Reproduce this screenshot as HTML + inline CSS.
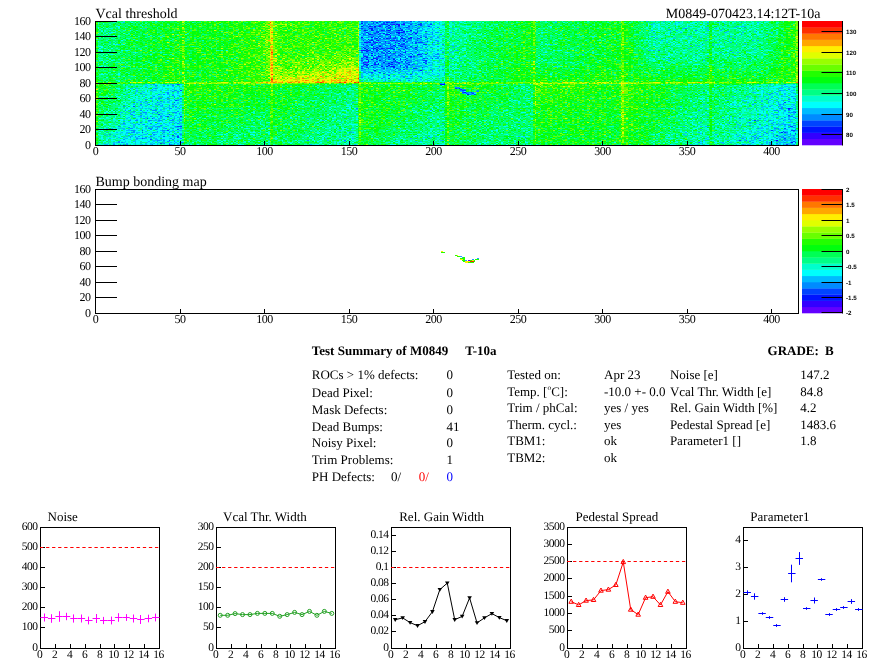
<!DOCTYPE html>
<html><head><meta charset="utf-8"><title>Test Summary of M0849</title>
<style>html,body{margin:0;padding:0;background:#fff;}body{width:896px;height:672px;overflow:hidden}</style>
</head><body>
<svg width="896" height="672" viewBox="0 0 896 672" style="display:block;text-rendering:geometricPrecision;will-change:transform">
<rect width="896" height="672" fill="#fff"/>
<rect x="95.5" y="21.5" width="703.0" height="124.0" fill="none" stroke="#000" stroke-width="1"/>
<defs><linearGradient id="g1" gradientUnits="userSpaceOnUse" x1="96.0" y1="21.0" x2="183.8" y2="52.0"><stop offset="0" stop-color="#6b0088" stop-opacity="1"/><stop offset="0.4" stop-color="#790088" stop-opacity="1"/><stop offset="1" stop-color="#8a0088" stop-opacity="1"/></linearGradient><linearGradient id="g2" gradientUnits="userSpaceOnUse" x1="183.8" y1="21.0" x2="271.5" y2="39.6"><stop offset="0" stop-color="#820088" stop-opacity="1"/><stop offset="0.6" stop-color="#8b0088" stop-opacity="1"/><stop offset="1" stop-color="#960088" stop-opacity="1"/></linearGradient><linearGradient id="g3" gradientUnits="userSpaceOnUse" x1="271.5" y1="21.0" x2="280.3" y2="83.0"><stop offset="0" stop-color="#8f0088" stop-opacity="1"/><stop offset="0.6" stop-color="#940088" stop-opacity="1"/><stop offset="0.8" stop-color="#9e0088" stop-opacity="1"/><stop offset="1" stop-color="#ba0088" stop-opacity="1"/></linearGradient><radialGradient id="g4" gradientUnits="userSpaceOnUse" cx="0" cy="0" r="1" gradientTransform="translate(359.2 83.0) scale(30.7 21.7)"><stop offset="0" stop-color="#c60088" stop-opacity="0.28"/><stop offset="1" stop-color="#c60088" stop-opacity="0"/></radialGradient><linearGradient id="g5" gradientUnits="userSpaceOnUse" x1="403.1" y1="21.0" x2="447.0" y2="21.0"><stop offset="0" stop-color="#530088" stop-opacity="0"/><stop offset="1" stop-color="#610088" stop-opacity="1"/></linearGradient><linearGradient id="g6" gradientUnits="userSpaceOnUse" x1="359.2" y1="64.4" x2="359.2" y2="83.0"><stop offset="0" stop-color="#590088" stop-opacity="0"/><stop offset="1" stop-color="#660088" stop-opacity="1"/></linearGradient><linearGradient id="g7" gradientUnits="userSpaceOnUse" x1="447.0" y1="21.0" x2="534.8" y2="52.0"><stop offset="0" stop-color="#620088" stop-opacity="1"/><stop offset="0.5" stop-color="#780088" stop-opacity="1"/><stop offset="1" stop-color="#870088" stop-opacity="1"/></linearGradient><linearGradient id="g8" gradientUnits="userSpaceOnUse" x1="534.8" y1="21.0" x2="622.5" y2="21.0"><stop offset="0" stop-color="#730088" stop-opacity="1"/><stop offset="0.5" stop-color="#7d0088" stop-opacity="1"/><stop offset="1" stop-color="#850088" stop-opacity="1"/></linearGradient><linearGradient id="g9" gradientUnits="userSpaceOnUse" x1="534.8" y1="64.4" x2="534.8" y2="83.0"><stop offset="0" stop-color="#8f0088" stop-opacity="0"/><stop offset="1" stop-color="#8f0088" stop-opacity="0.9"/></linearGradient><linearGradient id="g10" gradientUnits="userSpaceOnUse" x1="622.5" y1="21.0" x2="622.5" y2="83.0"><stop offset="0" stop-color="#650088" stop-opacity="1"/><stop offset="0.6" stop-color="#6b0088" stop-opacity="1"/><stop offset="1" stop-color="#8a0088" stop-opacity="1"/></linearGradient><linearGradient id="g11" gradientUnits="userSpaceOnUse" x1="622.5" y1="21.0" x2="653.2" y2="21.0"><stop offset="0" stop-color="#8c0088" stop-opacity="1"/><stop offset="1" stop-color="#8c0088" stop-opacity="0"/></linearGradient><linearGradient id="g12" gradientUnits="userSpaceOnUse" x1="710.2" y1="21.0" x2="710.2" y2="83.0"><stop offset="0" stop-color="#670088" stop-opacity="1"/><stop offset="0.55" stop-color="#6c0088" stop-opacity="1"/><stop offset="1" stop-color="#8a0088" stop-opacity="1"/></linearGradient><linearGradient id="g13" gradientUnits="userSpaceOnUse" x1="758.5" y1="21.0" x2="798.0" y2="21.0"><stop offset="0" stop-color="#8c0088" stop-opacity="0"/><stop offset="1" stop-color="#960088" stop-opacity="1"/></linearGradient><linearGradient id="g14" gradientUnits="userSpaceOnUse" x1="96.0" y1="83.0" x2="161.8" y2="101.6"><stop offset="0" stop-color="#8a0088" stop-opacity="1"/><stop offset="0.3" stop-color="#7d0088" stop-opacity="1"/><stop offset="0.6" stop-color="#630088" stop-opacity="1"/><stop offset="1" stop-color="#590088" stop-opacity="1"/></linearGradient><linearGradient id="g15" gradientUnits="userSpaceOnUse" x1="96.0" y1="89.2" x2="109.2" y2="145.0"><stop offset="0" stop-color="#470088" stop-opacity="0"/><stop offset="1" stop-color="#470088" stop-opacity="0.5"/></linearGradient><linearGradient id="g16" gradientUnits="userSpaceOnUse" x1="183.8" y1="83.0" x2="201.3" y2="145.0"><stop offset="0" stop-color="#910088" stop-opacity="1"/><stop offset="0.5" stop-color="#850088" stop-opacity="1"/><stop offset="1" stop-color="#750088" stop-opacity="1"/></linearGradient><linearGradient id="g17" gradientUnits="userSpaceOnUse" x1="271.5" y1="83.0" x2="341.7" y2="145.0"><stop offset="0" stop-color="#8c0088" stop-opacity="1"/><stop offset="0.5" stop-color="#780088" stop-opacity="1"/><stop offset="1" stop-color="#660088" stop-opacity="1"/></linearGradient><linearGradient id="g18" gradientUnits="userSpaceOnUse" x1="359.2" y1="83.0" x2="411.9" y2="145.0"><stop offset="0" stop-color="#8a0088" stop-opacity="1"/><stop offset="0.5" stop-color="#820088" stop-opacity="1"/><stop offset="1" stop-color="#6b0088" stop-opacity="1"/></linearGradient><linearGradient id="g19" gradientUnits="userSpaceOnUse" x1="447.0" y1="83.0" x2="499.6" y2="145.0"><stop offset="0" stop-color="#910088" stop-opacity="1"/><stop offset="0.5" stop-color="#7d0088" stop-opacity="1"/><stop offset="1" stop-color="#700088" stop-opacity="1"/></linearGradient><linearGradient id="g20" gradientUnits="userSpaceOnUse" x1="534.8" y1="83.0" x2="552.3" y2="145.0"><stop offset="0" stop-color="#990088" stop-opacity="1"/><stop offset="0.4" stop-color="#8a0088" stop-opacity="1"/><stop offset="1" stop-color="#820088" stop-opacity="1"/></linearGradient><linearGradient id="g21" gradientUnits="userSpaceOnUse" x1="622.5" y1="83.0" x2="710.2" y2="132.6"><stop offset="0" stop-color="#990088" stop-opacity="1"/><stop offset="0.5" stop-color="#7d0088" stop-opacity="1"/><stop offset="1" stop-color="#630088" stop-opacity="1"/></linearGradient><linearGradient id="g22" gradientUnits="userSpaceOnUse" x1="710.2" y1="83.0" x2="798.0" y2="132.6"><stop offset="0" stop-color="#7a0088" stop-opacity="1"/><stop offset="0.5" stop-color="#620088" stop-opacity="1"/><stop offset="1" stop-color="#470088" stop-opacity="1"/></linearGradient><linearGradient id="g23" gradientUnits="userSpaceOnUse" x1="262.5" y1="0" x2="280.5" y2="0"><stop offset="0" stop-color="#b90088" stop-opacity="0"/><stop offset="0.5" stop-color="#b90088" stop-opacity="0.55"/><stop offset="1" stop-color="#b90088" stop-opacity="0"/></linearGradient><linearGradient id="g24" gradientUnits="userSpaceOnUse" x1="618.5" y1="0" x2="628.5" y2="0"><stop offset="0" stop-color="#b20088" stop-opacity="0"/><stop offset="0.5" stop-color="#b20088" stop-opacity="0.35"/><stop offset="1" stop-color="#b20088" stop-opacity="0"/></linearGradient><linearGradient id="g25" gradientUnits="userSpaceOnUse" x1="356.2" y1="0" x2="364.2" y2="0"><stop offset="0" stop-color="#a60088" stop-opacity="0"/><stop offset="0.5" stop-color="#a60088" stop-opacity="0.25"/><stop offset="1" stop-color="#a60088" stop-opacity="0"/></linearGradient><filter id="hm" x="96.0" y="21.0" width="702.0" height="124.0" filterUnits="userSpaceOnUse" color-interpolation-filters="sRGB">
<feTurbulence type="fractalNoise" baseFrequency="0.5926 1.5" numOctaves="1" seed="7" result="t"/>
<feColorMatrix in="t" type="matrix" values="1 0 0 0 0 1 0 0 0 0 1 0 0 0 0 0 0 0 0 1" result="n"/>
<feColorMatrix in="SourceGraphic" type="matrix" values="1 0 0 0 0 1 0 0 0 0 1 0 0 0 0 0 0 0 0 1" result="b"/>
<feComposite in="b" in2="n" operator="arithmetic" k1="0" k2="1" k3="0.58" k4="-0.29" result="c"/>
<feComponentTransfer in="c" result="pc"><feFuncR type="discrete" tableValues="0.387 0.200 0.000 0.000 0.000 0.000 0.000 0.000 0.000 0.000 0.000 0.133 0.413 0.600 0.880 1.000 1.000 1.000 1.000 1.000"/><feFuncG type="discrete" tableValues="0.000 0.000 0.080 0.267 0.547 0.733 1.000 1.000 1.000 1.000 1.000 1.000 1.000 1.000 1.000 0.933 0.653 0.467 0.187 0.000"/><feFuncB type="discrete" tableValues="1.000 1.000 1.000 1.000 1.000 1.000 0.987 0.800 0.520 0.333 0.053 0.000 0.000 0.000 0.000 0.000 0.000 0.000 0.000 0.000"/><feFuncA type="linear" slope="0" intercept="1"/></feComponentTransfer>
<feDisplacementMap in="pc" in2="SourceGraphic" scale="8" xChannelSelector="G" yChannelSelector="B"/>
</filter><g id="dt" shape-rendering="crispEdges"><rect x="0" width="1" height="124" fill="#008800"/><rect x="1" width="1" height="124" fill="#006800"/><rect x="2" width="1" height="124" fill="#008800"/><rect x="3" width="1" height="124" fill="#00a700"/><rect x="4" width="1" height="124" fill="#008800"/><rect x="5" width="1" height="124" fill="#008800"/><rect x="6" width="1" height="124" fill="#006800"/><rect x="7" width="1" height="124" fill="#008800"/><rect x="8" width="1" height="124" fill="#00a700"/><rect x="9" width="1" height="124" fill="#008800"/><rect x="10" width="1" height="124" fill="#008800"/><rect x="11" width="1" height="124" fill="#006800"/><rect x="12" width="1" height="124" fill="#008800"/><rect x="13" width="1" height="124" fill="#00a700"/><rect x="14" width="1" height="124" fill="#008800"/><rect x="15" width="1" height="124" fill="#00a700"/><rect x="16" width="1" height="124" fill="#008800"/><rect x="17" width="1" height="124" fill="#008800"/><rect x="18" width="1" height="124" fill="#006800"/><rect x="19" width="1" height="124" fill="#008800"/><rect x="20" width="1" height="124" fill="#00a700"/><rect x="21" width="1" height="124" fill="#008800"/><rect x="22" width="1" height="124" fill="#008800"/><rect x="23" width="1" height="124" fill="#006800"/><rect x="24" width="1" height="124" fill="#008800"/><rect x="25" width="1" height="124" fill="#00a700"/><rect x="26" width="1" height="124" fill="#008800"/></g></defs>
<g filter="url(#hm)"><rect x="96.0" y="21.0" width="702.0" height="124.0" fill="#800088"/><rect x="96.00" y="21.00" width="88.05" height="62.30" fill="url(#g1)"/>
<rect x="183.75" y="21.00" width="88.05" height="62.30" fill="url(#g2)"/>
<rect x="271.50" y="21.00" width="88.05" height="62.30" fill="url(#g3)"/>
<rect x="271.50" y="21.00" width="88.05" height="62.30" fill="url(#g4)"/>
<rect x="359.25" y="21.00" width="88.05" height="62.30" fill="#3d0088"/>
<rect x="359.25" y="21.00" width="88.05" height="62.30" fill="url(#g5)"/>
<rect x="359.25" y="21.00" width="88.05" height="62.30" fill="url(#g6)"/>
<rect x="447.00" y="21.00" width="88.05" height="62.30" fill="url(#g7)"/>
<rect x="534.75" y="21.00" width="88.05" height="62.30" fill="url(#g8)"/>
<rect x="534.75" y="21.00" width="88.05" height="62.30" fill="url(#g9)"/>
<rect x="622.50" y="21.00" width="88.05" height="62.30" fill="url(#g10)"/>
<rect x="622.50" y="21.00" width="88.05" height="62.30" fill="url(#g11)"/>
<rect x="710.25" y="21.00" width="88.05" height="62.30" fill="url(#g12)"/>
<rect x="710.25" y="21.00" width="88.05" height="62.30" fill="url(#g13)"/>
<rect x="96.00" y="83.00" width="88.05" height="62.30" fill="url(#g14)"/>
<rect x="96.00" y="83.00" width="88.05" height="62.30" fill="url(#g15)"/>
<rect x="183.75" y="83.00" width="88.05" height="62.30" fill="url(#g16)"/>
<rect x="271.50" y="83.00" width="88.05" height="62.30" fill="url(#g17)"/>
<rect x="359.25" y="83.00" width="88.05" height="62.30" fill="url(#g18)"/>
<rect x="447.00" y="83.00" width="88.05" height="62.30" fill="url(#g19)"/>
<rect x="534.75" y="83.00" width="88.05" height="62.30" fill="url(#g20)"/>
<rect x="622.50" y="83.00" width="88.05" height="62.30" fill="url(#g21)"/>
<rect x="710.25" y="83.00" width="88.05" height="62.30" fill="url(#g22)"/>
<rect x="182.05" y="21.00" width="3.40" height="124.00" fill="#ff0088" fill-opacity="0.17"/>
<rect x="269.80" y="21.00" width="3.40" height="124.00" fill="#ff0088" fill-opacity="0.17"/>
<rect x="357.55" y="21.00" width="3.40" height="124.00" fill="#ff0088" fill-opacity="0.17"/>
<rect x="445.30" y="21.00" width="3.40" height="124.00" fill="#ff0088" fill-opacity="0.17"/>
<rect x="533.05" y="21.00" width="3.40" height="124.00" fill="#ff0088" fill-opacity="0.17"/>
<rect x="620.80" y="21.00" width="3.40" height="124.00" fill="#ff0088" fill-opacity="0.17"/>
<rect x="708.55" y="21.00" width="3.40" height="124.00" fill="#ff0088" fill-opacity="0.17"/>
<rect x="96.00" y="21.00" width="1.80" height="124.00" fill="#ff0088" fill-opacity="0.15"/>
<rect x="796.20" y="21.00" width="1.80" height="124.00" fill="#ff0088" fill-opacity="0.15"/>
<rect x="262.50" y="21.00" width="18.00" height="62.00" fill="url(#g23)"/>
<rect x="618.50" y="83.00" width="10.00" height="62.00" fill="url(#g24)"/>
<rect x="356.25" y="83.00" width="8.00" height="62.00" fill="url(#g25)"/>
<rect x="269.80" y="21.00" width="3.40" height="62.00" fill="#ff0088" fill-opacity="0.2"/>
<rect x="271.40" y="46.00" width="1.80" height="37.00" fill="#ff0088" fill-opacity="0.28"/>
<rect x="357.25" y="56.00" width="2.00" height="27.00" fill="#ff0088" fill-opacity="0.15"/>
<rect x="96.00" y="82.00" width="702.00" height="2.00" fill="#ff0088" fill-opacity="0.24"/>
<rect x="271.50" y="80.00" width="87.75" height="3.00" fill="#ff0088" fill-opacity="0.12"/>
<rect x="441" y="83" width="4" height="2" fill="#290088" fill-opacity="0.85"/>
<rect x="455" y="87" width="5" height="2" fill="#290088" fill-opacity="0.85"/>
<rect x="460" y="88" width="3" height="2" fill="#290088" fill-opacity="0.85"/>
<rect x="463" y="89" width="2" height="5" fill="#290088" fill-opacity="0.85"/>
<rect x="460" y="90" width="3" height="2" fill="#290088" fill-opacity="0.85"/>
<rect x="465" y="92" width="3" height="3" fill="#290088" fill-opacity="0.85"/>
<rect x="468" y="92" width="7" height="3" fill="#290088" fill-opacity="0.85"/>
<rect x="475" y="91" width="4" height="1" fill="#290088" fill-opacity="0.85"/>
<rect x="477" y="90" width="2" height="1" fill="#290088" fill-opacity="0.85"/><g style="mix-blend-mode:screen"><use href="#dt" x="96" y="21"/><use href="#dt" x="123" y="21"/><use href="#dt" x="150" y="21"/><use href="#dt" x="177" y="21"/><use href="#dt" x="204" y="21"/><use href="#dt" x="231" y="21"/><use href="#dt" x="258" y="21"/><use href="#dt" x="285" y="21"/><use href="#dt" x="312" y="21"/><use href="#dt" x="339" y="21"/><use href="#dt" x="366" y="21"/><use href="#dt" x="393" y="21"/><use href="#dt" x="420" y="21"/><use href="#dt" x="447" y="21"/><use href="#dt" x="474" y="21"/><use href="#dt" x="501" y="21"/><use href="#dt" x="528" y="21"/><use href="#dt" x="555" y="21"/><use href="#dt" x="582" y="21"/><use href="#dt" x="609" y="21"/><use href="#dt" x="636" y="21"/><use href="#dt" x="663" y="21"/><use href="#dt" x="690" y="21"/><use href="#dt" x="717" y="21"/><use href="#dt" x="744" y="21"/><use href="#dt" x="771" y="21"/></g></g>
<path d="M95.5 21.0V145.5H798.5V21.0" fill="none" stroke="#000" stroke-width="1"/>
<line x1="95.5" y1="21.5" x2="117" y2="21.5" stroke="#000" stroke-width="1"/>
<text x="90.4" y="149.20" text-anchor="end" font-size="12" letter-spacing="-0.5" font-family="Liberation Serif, serif">0</text>
<line x1="95.5" y1="129.50" x2="117" y2="129.50" stroke="#000" stroke-width="1"/>
<text x="90.4" y="133.20" text-anchor="end" font-size="12" letter-spacing="-0.5" font-family="Liberation Serif, serif">20</text>
<line x1="95.5" y1="114.50" x2="117" y2="114.50" stroke="#000" stroke-width="1"/>
<text x="90.4" y="118.20" text-anchor="end" font-size="12" letter-spacing="-0.5" font-family="Liberation Serif, serif">40</text>
<line x1="95.5" y1="98.50" x2="117" y2="98.50" stroke="#000" stroke-width="1"/>
<text x="90.4" y="102.20" text-anchor="end" font-size="12" letter-spacing="-0.5" font-family="Liberation Serif, serif">60</text>
<line x1="95.5" y1="83.50" x2="117" y2="83.50" stroke="#000" stroke-width="1"/>
<text x="90.4" y="87.20" text-anchor="end" font-size="12" letter-spacing="-0.5" font-family="Liberation Serif, serif">80</text>
<line x1="95.5" y1="67.50" x2="117" y2="67.50" stroke="#000" stroke-width="1"/>
<text x="90.4" y="71.20" text-anchor="end" font-size="12" letter-spacing="-0.5" font-family="Liberation Serif, serif">100</text>
<line x1="95.5" y1="52.50" x2="117" y2="52.50" stroke="#000" stroke-width="1"/>
<text x="90.4" y="56.20" text-anchor="end" font-size="12" letter-spacing="-0.5" font-family="Liberation Serif, serif">120</text>
<line x1="95.5" y1="36.50" x2="117" y2="36.50" stroke="#000" stroke-width="1"/>
<text x="90.4" y="40.20" text-anchor="end" font-size="12" letter-spacing="-0.5" font-family="Liberation Serif, serif">140</text>
<text x="90.4" y="25.20" text-anchor="end" font-size="12" letter-spacing="-0.5" font-family="Liberation Serif, serif">160</text>
<text x="95.50" y="155.10" text-anchor="middle" font-size="12" letter-spacing="-0.5" font-family="Liberation Serif, serif">0</text>
<line x1="180.5" y1="145.5" x2="180.5" y2="141.0" stroke="#000" stroke-width="1"/>
<text x="180.00" y="155.10" text-anchor="middle" font-size="12" letter-spacing="-0.5" font-family="Liberation Serif, serif">50</text>
<line x1="264.5" y1="145.5" x2="264.5" y2="141.0" stroke="#000" stroke-width="1"/>
<text x="264.49" y="155.10" text-anchor="middle" font-size="12" letter-spacing="-0.5" font-family="Liberation Serif, serif">100</text>
<line x1="349.5" y1="145.5" x2="349.5" y2="141.0" stroke="#000" stroke-width="1"/>
<text x="348.99" y="155.10" text-anchor="middle" font-size="12" letter-spacing="-0.5" font-family="Liberation Serif, serif">150</text>
<line x1="433.5" y1="145.5" x2="433.5" y2="141.0" stroke="#000" stroke-width="1"/>
<text x="433.48" y="155.10" text-anchor="middle" font-size="12" letter-spacing="-0.5" font-family="Liberation Serif, serif">200</text>
<line x1="518.5" y1="145.5" x2="518.5" y2="141.0" stroke="#000" stroke-width="1"/>
<text x="517.98" y="155.10" text-anchor="middle" font-size="12" letter-spacing="-0.5" font-family="Liberation Serif, serif">250</text>
<line x1="602.5" y1="145.5" x2="602.5" y2="141.0" stroke="#000" stroke-width="1"/>
<text x="602.47" y="155.10" text-anchor="middle" font-size="12" letter-spacing="-0.5" font-family="Liberation Serif, serif">300</text>
<line x1="687.5" y1="145.5" x2="687.5" y2="141.0" stroke="#000" stroke-width="1"/>
<text x="686.97" y="155.10" text-anchor="middle" font-size="12" letter-spacing="-0.5" font-family="Liberation Serif, serif">350</text>
<line x1="771.5" y1="145.5" x2="771.5" y2="141.0" stroke="#000" stroke-width="1"/>
<text x="771.46" y="155.10" text-anchor="middle" font-size="12" letter-spacing="-0.5" font-family="Liberation Serif, serif">400</text>
<text x="95.5" y="17.5" font-size="14" font-family="Liberation Serif, serif">Vcal threshold</text>
<text x="820.5" y="17.5" text-anchor="end" font-size="14" font-family="Liberation Serif, serif">M0849-070423.14:12T-10a</text>
<rect x="802" y="138.80" width="40.5" height="6.50" fill="#6300ff"/>
<rect x="802" y="132.60" width="40.5" height="6.50" fill="#3300ff"/>
<rect x="802" y="126.40" width="40.5" height="6.50" fill="#0014ff"/>
<rect x="802" y="120.20" width="40.5" height="6.50" fill="#0044ff"/>
<rect x="802" y="114.00" width="40.5" height="6.50" fill="#008bff"/>
<rect x="802" y="107.80" width="40.5" height="6.50" fill="#00bbff"/>
<rect x="802" y="101.60" width="40.5" height="6.50" fill="#00fffc"/>
<rect x="802" y="95.40" width="40.5" height="6.50" fill="#00ffcc"/>
<rect x="802" y="89.20" width="40.5" height="6.50" fill="#00ff85"/>
<rect x="802" y="83.00" width="40.5" height="6.50" fill="#00ff55"/>
<rect x="802" y="76.80" width="40.5" height="6.50" fill="#00ff0e"/>
<rect x="802" y="70.60" width="40.5" height="6.50" fill="#22ff00"/>
<rect x="802" y="64.40" width="40.5" height="6.50" fill="#69ff00"/>
<rect x="802" y="58.20" width="40.5" height="6.50" fill="#99ff00"/>
<rect x="802" y="52.00" width="40.5" height="6.50" fill="#e0ff00"/>
<rect x="802" y="45.80" width="40.5" height="6.50" fill="#ffee00"/>
<rect x="802" y="39.60" width="40.5" height="6.50" fill="#ffa700"/>
<rect x="802" y="33.40" width="40.5" height="6.50" fill="#ff7700"/>
<rect x="802" y="27.20" width="40.5" height="6.50" fill="#ff3000"/>
<rect x="802" y="21.00" width="40.5" height="6.50" fill="#ff0000"/>
<line x1="842.5" y1="21.0" x2="842.5" y2="145.5" stroke="#000" stroke-width="1"/>
<line x1="821.5" y1="134.50" x2="842.5" y2="134.50" stroke="#000" stroke-width="1"/>
<text x="846" y="136.80" font-size="6.2" font-weight="bold" font-family="Liberation Sans, sans-serif">80</text>
<line x1="821.5" y1="114.50" x2="842.5" y2="114.50" stroke="#000" stroke-width="1"/>
<text x="846" y="116.80" font-size="6.2" font-weight="bold" font-family="Liberation Sans, sans-serif">90</text>
<line x1="821.5" y1="93.50" x2="842.5" y2="93.50" stroke="#000" stroke-width="1"/>
<text x="846" y="95.80" font-size="6.2" font-weight="bold" font-family="Liberation Sans, sans-serif">100</text>
<line x1="821.5" y1="72.50" x2="842.5" y2="72.50" stroke="#000" stroke-width="1"/>
<text x="846" y="74.80" font-size="6.2" font-weight="bold" font-family="Liberation Sans, sans-serif">110</text>
<line x1="821.5" y1="52.50" x2="842.5" y2="52.50" stroke="#000" stroke-width="1"/>
<text x="846" y="54.80" font-size="6.2" font-weight="bold" font-family="Liberation Sans, sans-serif">120</text>
<line x1="821.5" y1="31.50" x2="842.5" y2="31.50" stroke="#000" stroke-width="1"/>
<text x="846" y="33.80" font-size="6.2" font-weight="bold" font-family="Liberation Sans, sans-serif">130</text>
<rect x="95.5" y="189.5" width="703.0" height="124.0" fill="none" stroke="#000" stroke-width="1"/>
<path d="M95.5 189.0V313.5H798.5V189.0" fill="none" stroke="#000" stroke-width="1"/>
<line x1="95.5" y1="189.5" x2="117" y2="189.5" stroke="#000" stroke-width="1"/>
<text x="90.4" y="317.20" text-anchor="end" font-size="12" letter-spacing="-0.5" font-family="Liberation Serif, serif">0</text>
<line x1="95.5" y1="297.50" x2="117" y2="297.50" stroke="#000" stroke-width="1"/>
<text x="90.4" y="301.20" text-anchor="end" font-size="12" letter-spacing="-0.5" font-family="Liberation Serif, serif">20</text>
<line x1="95.5" y1="282.50" x2="117" y2="282.50" stroke="#000" stroke-width="1"/>
<text x="90.4" y="286.20" text-anchor="end" font-size="12" letter-spacing="-0.5" font-family="Liberation Serif, serif">40</text>
<line x1="95.5" y1="266.50" x2="117" y2="266.50" stroke="#000" stroke-width="1"/>
<text x="90.4" y="270.20" text-anchor="end" font-size="12" letter-spacing="-0.5" font-family="Liberation Serif, serif">60</text>
<line x1="95.5" y1="251.50" x2="117" y2="251.50" stroke="#000" stroke-width="1"/>
<text x="90.4" y="255.20" text-anchor="end" font-size="12" letter-spacing="-0.5" font-family="Liberation Serif, serif">80</text>
<line x1="95.5" y1="235.50" x2="117" y2="235.50" stroke="#000" stroke-width="1"/>
<text x="90.4" y="239.20" text-anchor="end" font-size="12" letter-spacing="-0.5" font-family="Liberation Serif, serif">100</text>
<line x1="95.5" y1="220.50" x2="117" y2="220.50" stroke="#000" stroke-width="1"/>
<text x="90.4" y="224.20" text-anchor="end" font-size="12" letter-spacing="-0.5" font-family="Liberation Serif, serif">120</text>
<line x1="95.5" y1="204.50" x2="117" y2="204.50" stroke="#000" stroke-width="1"/>
<text x="90.4" y="208.20" text-anchor="end" font-size="12" letter-spacing="-0.5" font-family="Liberation Serif, serif">140</text>
<text x="90.4" y="193.20" text-anchor="end" font-size="12" letter-spacing="-0.5" font-family="Liberation Serif, serif">160</text>
<text x="95.50" y="323.10" text-anchor="middle" font-size="12" letter-spacing="-0.5" font-family="Liberation Serif, serif">0</text>
<line x1="180.5" y1="313.5" x2="180.5" y2="309.0" stroke="#000" stroke-width="1"/>
<text x="180.00" y="323.10" text-anchor="middle" font-size="12" letter-spacing="-0.5" font-family="Liberation Serif, serif">50</text>
<line x1="264.5" y1="313.5" x2="264.5" y2="309.0" stroke="#000" stroke-width="1"/>
<text x="264.49" y="323.10" text-anchor="middle" font-size="12" letter-spacing="-0.5" font-family="Liberation Serif, serif">100</text>
<line x1="349.5" y1="313.5" x2="349.5" y2="309.0" stroke="#000" stroke-width="1"/>
<text x="348.99" y="323.10" text-anchor="middle" font-size="12" letter-spacing="-0.5" font-family="Liberation Serif, serif">150</text>
<line x1="433.5" y1="313.5" x2="433.5" y2="309.0" stroke="#000" stroke-width="1"/>
<text x="433.48" y="323.10" text-anchor="middle" font-size="12" letter-spacing="-0.5" font-family="Liberation Serif, serif">200</text>
<line x1="518.5" y1="313.5" x2="518.5" y2="309.0" stroke="#000" stroke-width="1"/>
<text x="517.98" y="323.10" text-anchor="middle" font-size="12" letter-spacing="-0.5" font-family="Liberation Serif, serif">250</text>
<line x1="602.5" y1="313.5" x2="602.5" y2="309.0" stroke="#000" stroke-width="1"/>
<text x="602.47" y="323.10" text-anchor="middle" font-size="12" letter-spacing="-0.5" font-family="Liberation Serif, serif">300</text>
<line x1="687.5" y1="313.5" x2="687.5" y2="309.0" stroke="#000" stroke-width="1"/>
<text x="686.97" y="323.10" text-anchor="middle" font-size="12" letter-spacing="-0.5" font-family="Liberation Serif, serif">350</text>
<line x1="771.5" y1="313.5" x2="771.5" y2="309.0" stroke="#000" stroke-width="1"/>
<text x="771.46" y="323.10" text-anchor="middle" font-size="12" letter-spacing="-0.5" font-family="Liberation Serif, serif">400</text>
<text x="95.5" y="185.5" font-size="14" font-family="Liberation Serif, serif">Bump bonding map</text>
<rect x="802" y="306.80" width="40.5" height="6.50" fill="#6300ff"/>
<rect x="802" y="300.60" width="40.5" height="6.50" fill="#3300ff"/>
<rect x="802" y="294.40" width="40.5" height="6.50" fill="#0014ff"/>
<rect x="802" y="288.20" width="40.5" height="6.50" fill="#0044ff"/>
<rect x="802" y="282.00" width="40.5" height="6.50" fill="#008bff"/>
<rect x="802" y="275.80" width="40.5" height="6.50" fill="#00bbff"/>
<rect x="802" y="269.60" width="40.5" height="6.50" fill="#00fffc"/>
<rect x="802" y="263.40" width="40.5" height="6.50" fill="#00ffcc"/>
<rect x="802" y="257.20" width="40.5" height="6.50" fill="#00ff85"/>
<rect x="802" y="251.00" width="40.5" height="6.50" fill="#00ff55"/>
<rect x="802" y="244.80" width="40.5" height="6.50" fill="#00ff0e"/>
<rect x="802" y="238.60" width="40.5" height="6.50" fill="#22ff00"/>
<rect x="802" y="232.40" width="40.5" height="6.50" fill="#69ff00"/>
<rect x="802" y="226.20" width="40.5" height="6.50" fill="#99ff00"/>
<rect x="802" y="220.00" width="40.5" height="6.50" fill="#e0ff00"/>
<rect x="802" y="213.80" width="40.5" height="6.50" fill="#ffee00"/>
<rect x="802" y="207.60" width="40.5" height="6.50" fill="#ffa700"/>
<rect x="802" y="201.40" width="40.5" height="6.50" fill="#ff7700"/>
<rect x="802" y="195.20" width="40.5" height="6.50" fill="#ff3000"/>
<rect x="802" y="189.00" width="40.5" height="6.50" fill="#ff0000"/>
<line x1="842.5" y1="189.0" x2="842.5" y2="313.5" stroke="#000" stroke-width="1"/>
<line x1="821.5" y1="312.50" x2="842.5" y2="312.50" stroke="#000" stroke-width="1"/>
<text x="846" y="314.80" font-size="6.2" font-weight="bold" font-family="Liberation Sans, sans-serif">-2</text>
<line x1="821.5" y1="297.50" x2="842.5" y2="297.50" stroke="#000" stroke-width="1"/>
<text x="846" y="299.80" font-size="6.2" font-weight="bold" font-family="Liberation Sans, sans-serif">-1.5</text>
<line x1="821.5" y1="282.50" x2="842.5" y2="282.50" stroke="#000" stroke-width="1"/>
<text x="846" y="284.80" font-size="6.2" font-weight="bold" font-family="Liberation Sans, sans-serif">-1</text>
<line x1="821.5" y1="266.50" x2="842.5" y2="266.50" stroke="#000" stroke-width="1"/>
<text x="846" y="268.80" font-size="6.2" font-weight="bold" font-family="Liberation Sans, sans-serif">-0.5</text>
<line x1="821.5" y1="251.50" x2="842.5" y2="251.50" stroke="#000" stroke-width="1"/>
<text x="846" y="253.80" font-size="6.2" font-weight="bold" font-family="Liberation Sans, sans-serif">0</text>
<line x1="821.5" y1="235.50" x2="842.5" y2="235.50" stroke="#000" stroke-width="1"/>
<text x="846" y="237.80" font-size="6.2" font-weight="bold" font-family="Liberation Sans, sans-serif">0.5</text>
<line x1="821.5" y1="220.50" x2="842.5" y2="220.50" stroke="#000" stroke-width="1"/>
<text x="846" y="222.80" font-size="6.2" font-weight="bold" font-family="Liberation Sans, sans-serif">1</text>
<line x1="821.5" y1="204.50" x2="842.5" y2="204.50" stroke="#000" stroke-width="1"/>
<text x="846" y="206.80" font-size="6.2" font-weight="bold" font-family="Liberation Sans, sans-serif">1.5</text>
<line x1="821.5" y1="189.50" x2="842.5" y2="189.50" stroke="#000" stroke-width="1"/>
<text x="846" y="191.80" font-size="6.2" font-weight="bold" font-family="Liberation Sans, sans-serif">2</text>
<rect x="441" y="251" width="2" height="1" fill="#ffee00"/>
<rect x="441" y="252" width="4" height="1" fill="#22ff00"/>
<rect x="455" y="255" width="2" height="1" fill="#22ff00"/>
<rect x="457" y="255" width="1" height="1" fill="#ffee00"/>
<rect x="457" y="256" width="3" height="1" fill="#22ff00"/>
<rect x="460" y="256" width="2" height="1" fill="#1e9fff"/>
<rect x="462" y="257" width="1" height="1" fill="#1e9fff"/>
<rect x="463" y="257" width="2" height="3" fill="#22ff00"/>
<rect x="460" y="258" width="3" height="1" fill="#22ff00"/>
<rect x="460" y="259" width="3" height="1" fill="#ffee00"/>
<rect x="462" y="260" width="3" height="1" fill="#22ff00"/>
<rect x="463" y="261" width="2" height="1" fill="#22ff00"/>
<rect x="465" y="260" width="2" height="1" fill="#1e9fff"/>
<rect x="465" y="261" width="3" height="2" fill="#ffee00"/>
<rect x="468" y="260" width="2" height="1" fill="#6600ff"/>
<rect x="470" y="260" width="2" height="1" fill="#22ff00"/>
<rect x="472" y="259" width="2" height="1" fill="#1e9fff"/>
<rect x="472" y="260" width="2" height="1" fill="#ffee00"/>
<rect x="470" y="261" width="4" height="1" fill="#ff1a00"/>
<rect x="468" y="261" width="2" height="1" fill="#ffee00"/>
<rect x="468" y="262" width="6" height="1" fill="#22ff00"/>
<rect x="474" y="260" width="1" height="2" fill="#22ff00"/>
<rect x="475" y="259" width="4" height="1" fill="#22ff00"/>
<rect x="477" y="258" width="2" height="1" fill="#1e9fff"/>
<text x="311.8" y="355" font-size="13" font-family="Liberation Serif, serif" font-weight="bold">Test Summary of M0849</text>
<text x="465.2" y="355" font-size="13" font-family="Liberation Serif, serif" font-weight="bold">T-10a</text>
<text x="767.6" y="355" font-size="13" font-family="Liberation Serif, serif" font-weight="bold">GRADE:</text>
<text x="825" y="355" font-size="13" font-family="Liberation Serif, serif" font-weight="bold">B</text>
<text x="311.8" y="378.50" font-size="13" font-family="Liberation Serif, serif" >ROCs &gt; 1% defects:</text>
<text x="446.6" y="378.50" font-size="13" font-family="Liberation Serif, serif" >0</text>
<text x="311.8" y="396.50" font-size="13" font-family="Liberation Serif, serif" >Dead Pixel:</text>
<text x="446.6" y="396.50" font-size="13" font-family="Liberation Serif, serif" >0</text>
<text x="311.8" y="414.00" font-size="13" font-family="Liberation Serif, serif" >Mask Defects:</text>
<text x="446.6" y="414.00" font-size="13" font-family="Liberation Serif, serif" >0</text>
<text x="311.8" y="430.60" font-size="13" font-family="Liberation Serif, serif" >Dead Bumps:</text>
<text x="446.6" y="430.60" font-size="13" font-family="Liberation Serif, serif" >41</text>
<text x="311.8" y="447.00" font-size="13" font-family="Liberation Serif, serif" >Noisy Pixel:</text>
<text x="446.6" y="447.00" font-size="13" font-family="Liberation Serif, serif" >0</text>
<text x="311.8" y="463.60" font-size="13" font-family="Liberation Serif, serif" >Trim Problems:</text>
<text x="446.6" y="463.60" font-size="13" font-family="Liberation Serif, serif" >1</text>
<text x="311.8" y="480.60" font-size="13" font-family="Liberation Serif, serif" >PH Defects:</text>
<text x="391" y="480.60" font-size="13" font-family="Liberation Serif, serif" >0/</text>
<text x="418.8" y="480.60" font-size="13" font-family="Liberation Serif, serif" fill="#ff0000">0/</text>
<text x="446.6" y="480.60" font-size="13" font-family="Liberation Serif, serif" fill="#0000ff">0</text>
<text x="507.2" y="378.50" font-size="13" font-family="Liberation Serif, serif" >Tested on:</text>
<text x="604" y="378.50" font-size="13" font-family="Liberation Serif, serif" >Apr 23</text>
<text x="507.2" y="395.70" font-size="13" font-family="Liberation Serif, serif" >Temp. [<tspan font-size="7.5" dy="-6">o</tspan><tspan dy="6">C]:</tspan></text>
<text x="604" y="395.70" font-size="13" font-family="Liberation Serif, serif" >-10.0 +- 0.0</text>
<text x="507.2" y="411.80" font-size="13" font-family="Liberation Serif, serif" >Trim / phCal:</text>
<text x="604" y="411.80" font-size="13" font-family="Liberation Serif, serif" >yes / yes</text>
<text x="507.2" y="428.60" font-size="13" font-family="Liberation Serif, serif" >Therm. cycl.:</text>
<text x="604" y="428.60" font-size="13" font-family="Liberation Serif, serif" >yes</text>
<text x="507.2" y="445.30" font-size="13" font-family="Liberation Serif, serif" >TBM1:</text>
<text x="604" y="445.30" font-size="13" font-family="Liberation Serif, serif" >ok</text>
<text x="507.2" y="461.90" font-size="13" font-family="Liberation Serif, serif" >TBM2:</text>
<text x="604" y="461.90" font-size="13" font-family="Liberation Serif, serif" >ok</text>
<text x="669.9" y="378.50" font-size="13" font-family="Liberation Serif, serif" >Noise [e]</text>
<text x="800.2" y="378.50" font-size="13" font-family="Liberation Serif, serif" >147.2</text>
<text x="669.9" y="395.70" font-size="13" font-family="Liberation Serif, serif" >Vcal Thr. Width [e]</text>
<text x="800.2" y="395.70" font-size="13" font-family="Liberation Serif, serif" >84.8</text>
<text x="669.9" y="411.80" font-size="13" font-family="Liberation Serif, serif" >Rel. Gain Width [%]</text>
<text x="800.2" y="411.80" font-size="13" font-family="Liberation Serif, serif" >4.2</text>
<text x="669.9" y="428.60" font-size="13" font-family="Liberation Serif, serif" >Pedestal Spread [e]</text>
<text x="800.2" y="428.60" font-size="13" font-family="Liberation Serif, serif" >1483.6</text>
<text x="669.9" y="445.30" font-size="13" font-family="Liberation Serif, serif" >Parameter1 []</text>
<text x="800.2" y="445.30" font-size="13" font-family="Liberation Serif, serif" >1.8</text>
<rect x="40.5" y="527.5" width="119" height="121.0" fill="none" stroke="#000" stroke-width="1"/>
<line x1="40.5" y1="648.50" x2="45.0" y2="648.50" stroke="#000" stroke-width="1"/>
<text x="37.5" y="650.90" text-anchor="end" font-size="11.5" letter-spacing="-0.5" font-family="Liberation Serif, serif">0</text>
<line x1="40.5" y1="627.50" x2="45.0" y2="627.50" stroke="#000" stroke-width="1"/>
<text x="37.5" y="629.90" text-anchor="end" font-size="11.5" letter-spacing="-0.5" font-family="Liberation Serif, serif">100</text>
<line x1="40.5" y1="607.50" x2="45.0" y2="607.50" stroke="#000" stroke-width="1"/>
<text x="37.5" y="609.90" text-anchor="end" font-size="11.5" letter-spacing="-0.5" font-family="Liberation Serif, serif">200</text>
<line x1="40.5" y1="587.50" x2="45.0" y2="587.50" stroke="#000" stroke-width="1"/>
<text x="37.5" y="589.90" text-anchor="end" font-size="11.5" letter-spacing="-0.5" font-family="Liberation Serif, serif">300</text>
<line x1="40.5" y1="567.50" x2="45.0" y2="567.50" stroke="#000" stroke-width="1"/>
<text x="37.5" y="569.90" text-anchor="end" font-size="11.5" letter-spacing="-0.5" font-family="Liberation Serif, serif">400</text>
<line x1="40.5" y1="547.50" x2="45.0" y2="547.50" stroke="#000" stroke-width="1"/>
<text x="37.5" y="549.90" text-anchor="end" font-size="11.5" letter-spacing="-0.5" font-family="Liberation Serif, serif">500</text>
<line x1="40.5" y1="527.50" x2="45.0" y2="527.50" stroke="#000" stroke-width="1"/>
<text x="37.5" y="529.90" text-anchor="end" font-size="11.5" letter-spacing="-0.5" font-family="Liberation Serif, serif">600</text>
<line x1="40.50" y1="648.5" x2="40.50" y2="644.0" stroke="#000" stroke-width="1"/>
<text x="39.60" y="657.70" text-anchor="middle" font-size="11.5" letter-spacing="-0.5" font-family="Liberation Serif, serif">0</text>
<line x1="55.50" y1="648.5" x2="55.50" y2="644.0" stroke="#000" stroke-width="1"/>
<text x="54.60" y="657.70" text-anchor="middle" font-size="11.5" letter-spacing="-0.5" font-family="Liberation Serif, serif">2</text>
<line x1="70.50" y1="648.5" x2="70.50" y2="644.0" stroke="#000" stroke-width="1"/>
<text x="69.60" y="657.70" text-anchor="middle" font-size="11.5" letter-spacing="-0.5" font-family="Liberation Serif, serif">4</text>
<line x1="85.50" y1="648.5" x2="85.50" y2="644.0" stroke="#000" stroke-width="1"/>
<text x="84.60" y="657.70" text-anchor="middle" font-size="11.5" letter-spacing="-0.5" font-family="Liberation Serif, serif">6</text>
<line x1="100.50" y1="648.5" x2="100.50" y2="644.0" stroke="#000" stroke-width="1"/>
<text x="99.60" y="657.70" text-anchor="middle" font-size="11.5" letter-spacing="-0.5" font-family="Liberation Serif, serif">8</text>
<line x1="114.50" y1="648.5" x2="114.50" y2="644.0" stroke="#000" stroke-width="1"/>
<text x="113.60" y="657.70" text-anchor="middle" font-size="11.5" letter-spacing="-0.5" font-family="Liberation Serif, serif">10</text>
<line x1="129.50" y1="648.5" x2="129.50" y2="644.0" stroke="#000" stroke-width="1"/>
<text x="128.60" y="657.70" text-anchor="middle" font-size="11.5" letter-spacing="-0.5" font-family="Liberation Serif, serif">12</text>
<line x1="144.50" y1="648.5" x2="144.50" y2="644.0" stroke="#000" stroke-width="1"/>
<text x="143.60" y="657.70" text-anchor="middle" font-size="11.5" letter-spacing="-0.5" font-family="Liberation Serif, serif">14</text>
<line x1="159.50" y1="648.5" x2="159.50" y2="644.0" stroke="#000" stroke-width="1"/>
<text x="158.60" y="657.70" text-anchor="middle" font-size="11.5" letter-spacing="-0.5" font-family="Liberation Serif, serif">16</text>
<text x="47.5" y="520.7" font-size="13" font-family="Liberation Serif, serif">Noise</text>
<line x1="40.0" y1="547.50" x2="159.5" y2="547.50" stroke="#ff0000" stroke-width="1" stroke-dasharray="3.3,2.75"/>
<path d="M40.50 617.50H47.94M44.50 613.50V621.50M47.94 618.50H55.38M51.50 614.20V622.80M55.38 616.50H62.81M59.50 611.20V621.80M62.81 616.50H70.25M66.50 612.80V620.20M70.25 618.50H77.69M73.50 614.40V622.60M77.69 618.50H85.12M81.50 614.50V622.50M85.12 620.50H92.56M88.50 616.60V624.40M92.56 618.50H100.00M96.50 614.00V623.00M100.00 620.50H107.44M103.50 616.90V624.10M107.44 620.50H114.88M111.50 616.60V624.40M114.88 617.50H122.31M118.50 613.20V621.80M122.31 617.50H129.75M126.50 614.10V620.90M129.75 618.50H137.19M133.50 614.50V622.50M137.19 619.50H144.62M140.50 615.00V624.00M144.62 618.50H152.06M148.50 614.70V622.30M152.06 617.50H159.50M155.50 613.60V621.40" stroke="#ff00ff" stroke-width="1" fill="none"/>
<rect x="216.5" y="527.5" width="119" height="121.0" fill="none" stroke="#000" stroke-width="1"/>
<line x1="216.5" y1="648.50" x2="221.0" y2="648.50" stroke="#000" stroke-width="1"/>
<text x="213.5" y="650.90" text-anchor="end" font-size="11.5" letter-spacing="-0.5" font-family="Liberation Serif, serif">0</text>
<line x1="216.5" y1="627.50" x2="221.0" y2="627.50" stroke="#000" stroke-width="1"/>
<text x="213.5" y="629.90" text-anchor="end" font-size="11.5" letter-spacing="-0.5" font-family="Liberation Serif, serif">50</text>
<line x1="216.5" y1="607.50" x2="221.0" y2="607.50" stroke="#000" stroke-width="1"/>
<text x="213.5" y="609.90" text-anchor="end" font-size="11.5" letter-spacing="-0.5" font-family="Liberation Serif, serif">100</text>
<line x1="216.5" y1="587.50" x2="221.0" y2="587.50" stroke="#000" stroke-width="1"/>
<text x="213.5" y="589.90" text-anchor="end" font-size="11.5" letter-spacing="-0.5" font-family="Liberation Serif, serif">150</text>
<line x1="216.5" y1="567.50" x2="221.0" y2="567.50" stroke="#000" stroke-width="1"/>
<text x="213.5" y="569.90" text-anchor="end" font-size="11.5" letter-spacing="-0.5" font-family="Liberation Serif, serif">200</text>
<line x1="216.5" y1="547.50" x2="221.0" y2="547.50" stroke="#000" stroke-width="1"/>
<text x="213.5" y="549.90" text-anchor="end" font-size="11.5" letter-spacing="-0.5" font-family="Liberation Serif, serif">250</text>
<line x1="216.5" y1="527.50" x2="221.0" y2="527.50" stroke="#000" stroke-width="1"/>
<text x="213.5" y="529.90" text-anchor="end" font-size="11.5" letter-spacing="-0.5" font-family="Liberation Serif, serif">300</text>
<line x1="216.50" y1="648.5" x2="216.50" y2="644.0" stroke="#000" stroke-width="1"/>
<text x="215.60" y="657.70" text-anchor="middle" font-size="11.5" letter-spacing="-0.5" font-family="Liberation Serif, serif">0</text>
<line x1="231.50" y1="648.5" x2="231.50" y2="644.0" stroke="#000" stroke-width="1"/>
<text x="230.60" y="657.70" text-anchor="middle" font-size="11.5" letter-spacing="-0.5" font-family="Liberation Serif, serif">2</text>
<line x1="246.50" y1="648.5" x2="246.50" y2="644.0" stroke="#000" stroke-width="1"/>
<text x="245.60" y="657.70" text-anchor="middle" font-size="11.5" letter-spacing="-0.5" font-family="Liberation Serif, serif">4</text>
<line x1="261.50" y1="648.5" x2="261.50" y2="644.0" stroke="#000" stroke-width="1"/>
<text x="260.60" y="657.70" text-anchor="middle" font-size="11.5" letter-spacing="-0.5" font-family="Liberation Serif, serif">6</text>
<line x1="276.50" y1="648.5" x2="276.50" y2="644.0" stroke="#000" stroke-width="1"/>
<text x="275.60" y="657.70" text-anchor="middle" font-size="11.5" letter-spacing="-0.5" font-family="Liberation Serif, serif">8</text>
<line x1="290.50" y1="648.5" x2="290.50" y2="644.0" stroke="#000" stroke-width="1"/>
<text x="289.60" y="657.70" text-anchor="middle" font-size="11.5" letter-spacing="-0.5" font-family="Liberation Serif, serif">10</text>
<line x1="305.50" y1="648.5" x2="305.50" y2="644.0" stroke="#000" stroke-width="1"/>
<text x="304.60" y="657.70" text-anchor="middle" font-size="11.5" letter-spacing="-0.5" font-family="Liberation Serif, serif">12</text>
<line x1="320.50" y1="648.5" x2="320.50" y2="644.0" stroke="#000" stroke-width="1"/>
<text x="319.60" y="657.70" text-anchor="middle" font-size="11.5" letter-spacing="-0.5" font-family="Liberation Serif, serif">14</text>
<line x1="335.50" y1="648.5" x2="335.50" y2="644.0" stroke="#000" stroke-width="1"/>
<text x="334.60" y="657.70" text-anchor="middle" font-size="11.5" letter-spacing="-0.5" font-family="Liberation Serif, serif">16</text>
<text x="223.0" y="520.7" font-size="13" font-family="Liberation Serif, serif">Vcal Thr. Width</text>
<line x1="216.0" y1="567.50" x2="335.5" y2="567.50" stroke="#ff0000" stroke-width="1" stroke-dasharray="3.3,2.75"/>
<polyline points="220.22,615.30 227.66,615.30 235.09,613.60 242.53,614.60 249.97,614.60 257.41,613.40 264.84,613.40 272.28,613.40 279.72,616.30 287.16,614.60 294.59,612.40 302.03,614.60 309.47,611.40 316.91,615.30 324.34,611.40 331.78,613.40" stroke="#22a022" stroke-width="1" fill="none"/>
<circle cx="220.22" cy="615.30" r="2" stroke="#22a022" stroke-width="1" fill="none"/>
<circle cx="227.66" cy="615.30" r="2" stroke="#22a022" stroke-width="1" fill="none"/>
<circle cx="235.09" cy="613.60" r="2" stroke="#22a022" stroke-width="1" fill="none"/>
<circle cx="242.53" cy="614.60" r="2" stroke="#22a022" stroke-width="1" fill="none"/>
<circle cx="249.97" cy="614.60" r="2" stroke="#22a022" stroke-width="1" fill="none"/>
<circle cx="257.41" cy="613.40" r="2" stroke="#22a022" stroke-width="1" fill="none"/>
<circle cx="264.84" cy="613.40" r="2" stroke="#22a022" stroke-width="1" fill="none"/>
<circle cx="272.28" cy="613.40" r="2" stroke="#22a022" stroke-width="1" fill="none"/>
<circle cx="279.72" cy="616.30" r="2" stroke="#22a022" stroke-width="1" fill="none"/>
<circle cx="287.16" cy="614.60" r="2" stroke="#22a022" stroke-width="1" fill="none"/>
<circle cx="294.59" cy="612.40" r="2" stroke="#22a022" stroke-width="1" fill="none"/>
<circle cx="302.03" cy="614.60" r="2" stroke="#22a022" stroke-width="1" fill="none"/>
<circle cx="309.47" cy="611.40" r="2" stroke="#22a022" stroke-width="1" fill="none"/>
<circle cx="316.91" cy="615.30" r="2" stroke="#22a022" stroke-width="1" fill="none"/>
<circle cx="324.34" cy="611.40" r="2" stroke="#22a022" stroke-width="1" fill="none"/>
<circle cx="331.78" cy="613.40" r="2" stroke="#22a022" stroke-width="1" fill="none"/>
<rect x="391.5" y="527.5" width="119" height="121.0" fill="none" stroke="#000" stroke-width="1"/>
<line x1="391.5" y1="648.50" x2="396.0" y2="648.50" stroke="#000" stroke-width="1"/>
<text x="388.5" y="650.90" text-anchor="end" font-size="11.5" letter-spacing="-0.5" font-family="Liberation Serif, serif">0</text>
<line x1="391.5" y1="631.50" x2="396.0" y2="631.50" stroke="#000" stroke-width="1"/>
<text x="388.5" y="633.90" text-anchor="end" font-size="11.5" letter-spacing="-0.5" font-family="Liberation Serif, serif">0.02</text>
<line x1="391.5" y1="615.50" x2="396.0" y2="615.50" stroke="#000" stroke-width="1"/>
<text x="388.5" y="617.90" text-anchor="end" font-size="11.5" letter-spacing="-0.5" font-family="Liberation Serif, serif">0.04</text>
<line x1="391.5" y1="599.50" x2="396.0" y2="599.50" stroke="#000" stroke-width="1"/>
<text x="388.5" y="601.90" text-anchor="end" font-size="11.5" letter-spacing="-0.5" font-family="Liberation Serif, serif">0.06</text>
<line x1="391.5" y1="583.50" x2="396.0" y2="583.50" stroke="#000" stroke-width="1"/>
<text x="388.5" y="585.90" text-anchor="end" font-size="11.5" letter-spacing="-0.5" font-family="Liberation Serif, serif">0.08</text>
<line x1="391.5" y1="567.50" x2="396.0" y2="567.50" stroke="#000" stroke-width="1"/>
<text x="388.5" y="569.90" text-anchor="end" font-size="11.5" letter-spacing="-0.5" font-family="Liberation Serif, serif">0.1</text>
<line x1="391.5" y1="551.50" x2="396.0" y2="551.50" stroke="#000" stroke-width="1"/>
<text x="388.5" y="553.90" text-anchor="end" font-size="11.5" letter-spacing="-0.5" font-family="Liberation Serif, serif">0.12</text>
<line x1="391.5" y1="535.50" x2="396.0" y2="535.50" stroke="#000" stroke-width="1"/>
<text x="388.5" y="537.90" text-anchor="end" font-size="11.5" letter-spacing="-0.5" font-family="Liberation Serif, serif">0.14</text>
<line x1="391.50" y1="648.5" x2="391.50" y2="644.0" stroke="#000" stroke-width="1"/>
<text x="390.60" y="657.70" text-anchor="middle" font-size="11.5" letter-spacing="-0.5" font-family="Liberation Serif, serif">0</text>
<line x1="406.50" y1="648.5" x2="406.50" y2="644.0" stroke="#000" stroke-width="1"/>
<text x="405.60" y="657.70" text-anchor="middle" font-size="11.5" letter-spacing="-0.5" font-family="Liberation Serif, serif">2</text>
<line x1="421.50" y1="648.5" x2="421.50" y2="644.0" stroke="#000" stroke-width="1"/>
<text x="420.60" y="657.70" text-anchor="middle" font-size="11.5" letter-spacing="-0.5" font-family="Liberation Serif, serif">4</text>
<line x1="436.50" y1="648.5" x2="436.50" y2="644.0" stroke="#000" stroke-width="1"/>
<text x="435.60" y="657.70" text-anchor="middle" font-size="11.5" letter-spacing="-0.5" font-family="Liberation Serif, serif">6</text>
<line x1="451.50" y1="648.5" x2="451.50" y2="644.0" stroke="#000" stroke-width="1"/>
<text x="450.60" y="657.70" text-anchor="middle" font-size="11.5" letter-spacing="-0.5" font-family="Liberation Serif, serif">8</text>
<line x1="465.50" y1="648.5" x2="465.50" y2="644.0" stroke="#000" stroke-width="1"/>
<text x="464.60" y="657.70" text-anchor="middle" font-size="11.5" letter-spacing="-0.5" font-family="Liberation Serif, serif">10</text>
<line x1="480.50" y1="648.5" x2="480.50" y2="644.0" stroke="#000" stroke-width="1"/>
<text x="479.60" y="657.70" text-anchor="middle" font-size="11.5" letter-spacing="-0.5" font-family="Liberation Serif, serif">12</text>
<line x1="495.50" y1="648.5" x2="495.50" y2="644.0" stroke="#000" stroke-width="1"/>
<text x="494.60" y="657.70" text-anchor="middle" font-size="11.5" letter-spacing="-0.5" font-family="Liberation Serif, serif">14</text>
<line x1="510.50" y1="648.5" x2="510.50" y2="644.0" stroke="#000" stroke-width="1"/>
<text x="509.60" y="657.70" text-anchor="middle" font-size="11.5" letter-spacing="-0.5" font-family="Liberation Serif, serif">16</text>
<text x="399.2" y="520.7" font-size="13" font-family="Liberation Serif, serif">Rel. Gain Width</text>
<line x1="391.0" y1="567.50" x2="510.5" y2="567.50" stroke="#ff0000" stroke-width="1" stroke-dasharray="3.3,2.75"/>
<polyline points="395.22,619.70 402.66,617.90 410.09,622.60 417.53,625.70 424.97,621.70 432.41,611.70 439.84,589.60 447.28,583.10 454.72,619.70 462.16,616.40 469.59,597.90 477.03,622.90 484.47,617.90 491.91,613.60 499.34,617.60 506.78,620.70" stroke="#000" stroke-width="1" fill="none"/>
<path d="M392.92 618.10H397.52L395.22 621.90Z" fill="#000"/>
<path d="M400.36 616.30H404.96L402.66 620.10Z" fill="#000"/>
<path d="M407.79 621.00H412.39L410.09 624.80Z" fill="#000"/>
<path d="M415.23 624.10H419.83L417.53 627.90Z" fill="#000"/>
<path d="M422.67 620.10H427.27L424.97 623.90Z" fill="#000"/>
<path d="M430.11 610.10H434.71L432.41 613.90Z" fill="#000"/>
<path d="M437.54 588.00H442.14L439.84 591.80Z" fill="#000"/>
<path d="M444.98 581.50H449.58L447.28 585.30Z" fill="#000"/>
<path d="M452.42 618.10H457.02L454.72 621.90Z" fill="#000"/>
<path d="M459.86 614.80H464.46L462.16 618.60Z" fill="#000"/>
<path d="M467.29 596.30H471.89L469.59 600.10Z" fill="#000"/>
<path d="M474.73 621.30H479.33L477.03 625.10Z" fill="#000"/>
<path d="M482.17 616.30H486.77L484.47 620.10Z" fill="#000"/>
<path d="M489.61 612.00H494.21L491.91 615.80Z" fill="#000"/>
<path d="M497.04 616.00H501.64L499.34 619.80Z" fill="#000"/>
<path d="M504.48 619.10H509.08L506.78 622.90Z" fill="#000"/>
<rect x="567.5" y="527.5" width="119" height="121.0" fill="none" stroke="#000" stroke-width="1"/>
<line x1="567.5" y1="648.50" x2="572.0" y2="648.50" stroke="#000" stroke-width="1"/>
<text x="564.5" y="650.90" text-anchor="end" font-size="11.5" letter-spacing="-0.5" font-family="Liberation Serif, serif">0</text>
<line x1="567.5" y1="630.50" x2="572.0" y2="630.50" stroke="#000" stroke-width="1"/>
<text x="564.5" y="632.90" text-anchor="end" font-size="11.5" letter-spacing="-0.5" font-family="Liberation Serif, serif">500</text>
<line x1="567.5" y1="613.50" x2="572.0" y2="613.50" stroke="#000" stroke-width="1"/>
<text x="564.5" y="615.90" text-anchor="end" font-size="11.5" letter-spacing="-0.5" font-family="Liberation Serif, serif">1000</text>
<line x1="567.5" y1="596.50" x2="572.0" y2="596.50" stroke="#000" stroke-width="1"/>
<text x="564.5" y="598.90" text-anchor="end" font-size="11.5" letter-spacing="-0.5" font-family="Liberation Serif, serif">1500</text>
<line x1="567.5" y1="578.50" x2="572.0" y2="578.50" stroke="#000" stroke-width="1"/>
<text x="564.5" y="580.90" text-anchor="end" font-size="11.5" letter-spacing="-0.5" font-family="Liberation Serif, serif">2000</text>
<line x1="567.5" y1="561.50" x2="572.0" y2="561.50" stroke="#000" stroke-width="1"/>
<text x="564.5" y="563.90" text-anchor="end" font-size="11.5" letter-spacing="-0.5" font-family="Liberation Serif, serif">2500</text>
<line x1="567.5" y1="544.50" x2="572.0" y2="544.50" stroke="#000" stroke-width="1"/>
<text x="564.5" y="546.90" text-anchor="end" font-size="11.5" letter-spacing="-0.5" font-family="Liberation Serif, serif">3000</text>
<line x1="567.5" y1="527.50" x2="572.0" y2="527.50" stroke="#000" stroke-width="1"/>
<text x="564.5" y="529.90" text-anchor="end" font-size="11.5" letter-spacing="-0.5" font-family="Liberation Serif, serif">3500</text>
<line x1="567.50" y1="648.5" x2="567.50" y2="644.0" stroke="#000" stroke-width="1"/>
<text x="566.60" y="657.70" text-anchor="middle" font-size="11.5" letter-spacing="-0.5" font-family="Liberation Serif, serif">0</text>
<line x1="582.50" y1="648.5" x2="582.50" y2="644.0" stroke="#000" stroke-width="1"/>
<text x="581.60" y="657.70" text-anchor="middle" font-size="11.5" letter-spacing="-0.5" font-family="Liberation Serif, serif">2</text>
<line x1="597.50" y1="648.5" x2="597.50" y2="644.0" stroke="#000" stroke-width="1"/>
<text x="596.60" y="657.70" text-anchor="middle" font-size="11.5" letter-spacing="-0.5" font-family="Liberation Serif, serif">4</text>
<line x1="612.50" y1="648.5" x2="612.50" y2="644.0" stroke="#000" stroke-width="1"/>
<text x="611.60" y="657.70" text-anchor="middle" font-size="11.5" letter-spacing="-0.5" font-family="Liberation Serif, serif">6</text>
<line x1="627.50" y1="648.5" x2="627.50" y2="644.0" stroke="#000" stroke-width="1"/>
<text x="626.60" y="657.70" text-anchor="middle" font-size="11.5" letter-spacing="-0.5" font-family="Liberation Serif, serif">8</text>
<line x1="641.50" y1="648.5" x2="641.50" y2="644.0" stroke="#000" stroke-width="1"/>
<text x="640.60" y="657.70" text-anchor="middle" font-size="11.5" letter-spacing="-0.5" font-family="Liberation Serif, serif">10</text>
<line x1="656.50" y1="648.5" x2="656.50" y2="644.0" stroke="#000" stroke-width="1"/>
<text x="655.60" y="657.70" text-anchor="middle" font-size="11.5" letter-spacing="-0.5" font-family="Liberation Serif, serif">12</text>
<line x1="671.50" y1="648.5" x2="671.50" y2="644.0" stroke="#000" stroke-width="1"/>
<text x="670.60" y="657.70" text-anchor="middle" font-size="11.5" letter-spacing="-0.5" font-family="Liberation Serif, serif">14</text>
<line x1="686.50" y1="648.5" x2="686.50" y2="644.0" stroke="#000" stroke-width="1"/>
<text x="685.60" y="657.70" text-anchor="middle" font-size="11.5" letter-spacing="-0.5" font-family="Liberation Serif, serif">16</text>
<text x="575.5" y="520.7" font-size="13" font-family="Liberation Serif, serif">Pedestal Spread</text>
<line x1="567.0" y1="561.50" x2="686.5" y2="561.50" stroke="#ff0000" stroke-width="1" stroke-dasharray="3.3,2.75"/>
<polyline points="571.22,601.70 578.66,604.90 586.09,600.60 593.53,599.90 600.97,590.60 608.41,589.60 615.84,584.90 623.28,562.00 630.72,609.60 638.16,614.60 645.59,597.70 653.03,596.70 660.47,604.90 667.91,591.70 675.34,601.70 682.78,602.70" stroke="#ff0000" stroke-width="1" fill="none"/>
<path d="M568.92 603.30H573.52L571.22 599.10Z" fill="none" stroke="#ff0000" stroke-width="1"/>
<path d="M576.36 606.50H580.96L578.66 602.30Z" fill="none" stroke="#ff0000" stroke-width="1"/>
<path d="M583.79 602.20H588.39L586.09 598.00Z" fill="none" stroke="#ff0000" stroke-width="1"/>
<path d="M591.23 601.50H595.83L593.53 597.30Z" fill="none" stroke="#ff0000" stroke-width="1"/>
<path d="M598.67 592.20H603.27L600.97 588.00Z" fill="none" stroke="#ff0000" stroke-width="1"/>
<path d="M606.11 591.20H610.71L608.41 587.00Z" fill="none" stroke="#ff0000" stroke-width="1"/>
<path d="M613.54 586.50H618.14L615.84 582.30Z" fill="none" stroke="#ff0000" stroke-width="1"/>
<path d="M620.98 563.60H625.58L623.28 559.40Z" fill="none" stroke="#ff0000" stroke-width="1"/>
<path d="M628.42 611.20H633.02L630.72 607.00Z" fill="none" stroke="#ff0000" stroke-width="1"/>
<path d="M635.86 616.20H640.46L638.16 612.00Z" fill="none" stroke="#ff0000" stroke-width="1"/>
<path d="M643.29 599.30H647.89L645.59 595.10Z" fill="none" stroke="#ff0000" stroke-width="1"/>
<path d="M650.73 598.30H655.33L653.03 594.10Z" fill="none" stroke="#ff0000" stroke-width="1"/>
<path d="M658.17 606.50H662.77L660.47 602.30Z" fill="none" stroke="#ff0000" stroke-width="1"/>
<path d="M665.61 593.30H670.21L667.91 589.10Z" fill="none" stroke="#ff0000" stroke-width="1"/>
<path d="M673.04 603.30H677.64L675.34 599.10Z" fill="none" stroke="#ff0000" stroke-width="1"/>
<path d="M680.48 604.30H685.08L682.78 600.10Z" fill="none" stroke="#ff0000" stroke-width="1"/>
<rect x="743.5" y="527.5" width="119" height="121.0" fill="none" stroke="#000" stroke-width="1"/>
<line x1="743.5" y1="648.50" x2="748.0" y2="648.50" stroke="#000" stroke-width="1"/>
<text x="740.5" y="650.90" text-anchor="end" font-size="11.5" letter-spacing="-0.5" font-family="Liberation Serif, serif">0</text>
<line x1="743.5" y1="621.50" x2="748.0" y2="621.50" stroke="#000" stroke-width="1"/>
<text x="740.5" y="623.90" text-anchor="end" font-size="11.5" letter-spacing="-0.5" font-family="Liberation Serif, serif">1</text>
<line x1="743.5" y1="594.50" x2="748.0" y2="594.50" stroke="#000" stroke-width="1"/>
<text x="740.5" y="596.90" text-anchor="end" font-size="11.5" letter-spacing="-0.5" font-family="Liberation Serif, serif">2</text>
<line x1="743.5" y1="567.50" x2="748.0" y2="567.50" stroke="#000" stroke-width="1"/>
<text x="740.5" y="569.90" text-anchor="end" font-size="11.5" letter-spacing="-0.5" font-family="Liberation Serif, serif">3</text>
<line x1="743.5" y1="540.50" x2="748.0" y2="540.50" stroke="#000" stroke-width="1"/>
<text x="740.5" y="542.90" text-anchor="end" font-size="11.5" letter-spacing="-0.5" font-family="Liberation Serif, serif">4</text>
<line x1="743.50" y1="648.5" x2="743.50" y2="644.0" stroke="#000" stroke-width="1"/>
<text x="742.60" y="657.70" text-anchor="middle" font-size="11.5" letter-spacing="-0.5" font-family="Liberation Serif, serif">0</text>
<line x1="758.50" y1="648.5" x2="758.50" y2="644.0" stroke="#000" stroke-width="1"/>
<text x="757.60" y="657.70" text-anchor="middle" font-size="11.5" letter-spacing="-0.5" font-family="Liberation Serif, serif">2</text>
<line x1="773.50" y1="648.5" x2="773.50" y2="644.0" stroke="#000" stroke-width="1"/>
<text x="772.60" y="657.70" text-anchor="middle" font-size="11.5" letter-spacing="-0.5" font-family="Liberation Serif, serif">4</text>
<line x1="788.50" y1="648.5" x2="788.50" y2="644.0" stroke="#000" stroke-width="1"/>
<text x="787.60" y="657.70" text-anchor="middle" font-size="11.5" letter-spacing="-0.5" font-family="Liberation Serif, serif">6</text>
<line x1="803.50" y1="648.5" x2="803.50" y2="644.0" stroke="#000" stroke-width="1"/>
<text x="802.60" y="657.70" text-anchor="middle" font-size="11.5" letter-spacing="-0.5" font-family="Liberation Serif, serif">8</text>
<line x1="817.50" y1="648.5" x2="817.50" y2="644.0" stroke="#000" stroke-width="1"/>
<text x="816.60" y="657.70" text-anchor="middle" font-size="11.5" letter-spacing="-0.5" font-family="Liberation Serif, serif">10</text>
<line x1="832.50" y1="648.5" x2="832.50" y2="644.0" stroke="#000" stroke-width="1"/>
<text x="831.60" y="657.70" text-anchor="middle" font-size="11.5" letter-spacing="-0.5" font-family="Liberation Serif, serif">12</text>
<line x1="847.50" y1="648.5" x2="847.50" y2="644.0" stroke="#000" stroke-width="1"/>
<text x="846.60" y="657.70" text-anchor="middle" font-size="11.5" letter-spacing="-0.5" font-family="Liberation Serif, serif">14</text>
<line x1="862.50" y1="648.5" x2="862.50" y2="644.0" stroke="#000" stroke-width="1"/>
<text x="861.60" y="657.70" text-anchor="middle" font-size="11.5" letter-spacing="-0.5" font-family="Liberation Serif, serif">16</text>
<text x="750.3" y="520.7" font-size="13" font-family="Liberation Serif, serif">Parameter1</text>
<path d="M743.50 592.50H750.94M747.50 590.40V594.60M750.94 596.50H758.38M754.50 593.30V599.70M758.38 613.50H765.81M762.50 612.20V614.80M765.81 617.50H773.25M769.50 616.10V618.90M773.25 625.50H780.69M776.50 624.10V626.90M780.69 599.50H788.12M784.50 597.20V601.80M788.12 573.50H795.56M791.50 564.70V582.30M795.56 558.50H803.00M799.50 552.10V564.90M803.00 608.50H810.44M806.50 607.20V609.80M810.44 600.50H817.88M814.50 597.50V603.50M817.88 579.50H825.31M821.50 578.20V580.80M825.31 614.50H832.75M829.50 613.10V615.90M832.75 609.50H840.19M836.50 608.10V610.90M840.19 607.50H847.62M843.50 606.10V608.90M847.62 601.50H855.06M851.50 599.10V603.90M855.06 609.50H862.50M858.50 608.10V610.90" stroke="#0000ff" stroke-width="1" fill="none"/>
</svg>
</body></html>
